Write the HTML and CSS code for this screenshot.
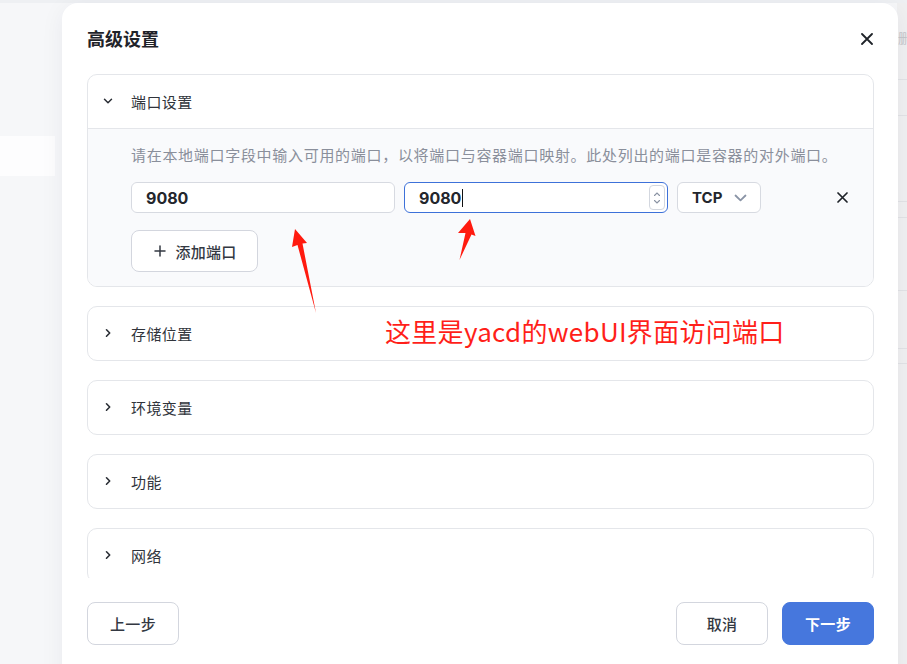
FILE: index.html
```html
<!DOCTYPE html>
<html lang="zh-CN">
<head>
<meta charset="utf-8">
<title>高级设置</title>
<link rel="stylesheet" href="styles.css">
</head>
<body>
<div class="page">
  <div class="page-left">
    <div class="page-row"></div>
  </div>
  <div class="page-right">
    <span class="peek">删</span>
    <div class="rline l1"></div>
    <div class="rline l2"></div>
    <div class="rline l3"></div>
    <div class="rline l4"></div>
    <div class="rline l5"></div>
    <div class="rline l6"></div>
    <div class="rline l7"></div>
  </div>
</div>

<div class="modal">
  <div class="modal-head">
    <h1 class="modal-title">高级设置</h1>
    <button class="icon-btn close-btn" aria-label="关闭">
      <svg width="12" height="12" viewBox="0 0 12 12"><path d="M1 1L11 11M11 1L1 11" stroke="#1f2329" stroke-width="1.8" stroke-linecap="round"/></svg>
    </button>
  </div>

  <div class="modal-body">
    <section class="panel open">
      <div class="panel-head">
        <svg class="chev" width="10" height="10" viewBox="0 0 10 10"><path d="M1.5 3.2L5 6.7L8.5 3.2" fill="none" stroke="#2b2f36" stroke-width="1.5" stroke-linecap="round" stroke-linejoin="round"/></svg>
        <span class="panel-title">端口设置</span>
      </div>
      <div class="panel-content">
        <p class="desc">请在本地端口字段中输入可用的端口，以将端口与容器端口映射。此处列出的端口是容器的对外端口。</p>
        <div class="port-row">
          <div class="field">9080</div>
          <div class="field focused">
            <span>9080</span><span class="caret"></span>
            <span class="spinner">
              <svg width="8" height="6" viewBox="0 0 8 6"><path d="M1.5 4.5L4 2L6.5 4.5" fill="none" stroke="#8a93a3" stroke-width="1.1" stroke-linecap="round"/></svg>
              <svg width="8" height="6" viewBox="0 0 8 6"><path d="M1.5 1.5L4 4L6.5 1.5" fill="none" stroke="#8a93a3" stroke-width="1.1" stroke-linecap="round"/></svg>
            </span>
          </div>
          <div class="select">
            <span>TCP</span>
            <svg width="13" height="8" viewBox="0 0 13 8"><path d="M1.5 1.5L6.5 6.3L11.5 1.5" fill="none" stroke="#8a94a6" stroke-width="1.8" stroke-linecap="round" stroke-linejoin="round"/></svg>
          </div>
          <button class="icon-btn del-btn" aria-label="删除">
            <svg width="11" height="11" viewBox="0 0 11 11"><path d="M1 1L10 10M10 1L1 10" stroke="#1f2329" stroke-width="1.7" stroke-linecap="round"/></svg>
          </button>
        </div>
        <button class="btn add-btn">
          <svg width="12" height="12" viewBox="0 0 12 12"><path d="M6 1V11M1 6H11" stroke="#333842" stroke-width="1.5" stroke-linecap="round"/></svg>
          <span>添加端口</span>
        </button>
      </div>
    </section>

    <section class="panel">
      <div class="panel-head">
        <svg class="chev" width="10" height="10" viewBox="0 0 10 10"><path d="M3.5 1.8L6.7 5L3.5 8.2" fill="none" stroke="#2b2f36" stroke-width="1.6" stroke-linecap="round" stroke-linejoin="round"/></svg>
        <span class="panel-title">存储位置</span>
      </div>
    </section>
    <section class="panel">
      <div class="panel-head">
        <svg class="chev" width="10" height="10" viewBox="0 0 10 10"><path d="M3.5 1.8L6.7 5L3.5 8.2" fill="none" stroke="#2b2f36" stroke-width="1.6" stroke-linecap="round" stroke-linejoin="round"/></svg>
        <span class="panel-title">环境变量</span>
      </div>
    </section>
    <section class="panel">
      <div class="panel-head">
        <svg class="chev" width="10" height="10" viewBox="0 0 10 10"><path d="M3.5 1.8L6.7 5L3.5 8.2" fill="none" stroke="#2b2f36" stroke-width="1.6" stroke-linecap="round" stroke-linejoin="round"/></svg>
        <span class="panel-title">功能</span>
      </div>
    </section>
    <section class="panel">
      <div class="panel-head">
        <svg class="chev" width="10" height="10" viewBox="0 0 10 10"><path d="M3.5 1.8L6.7 5L3.5 8.2" fill="none" stroke="#2b2f36" stroke-width="1.6" stroke-linecap="round" stroke-linejoin="round"/></svg>
        <span class="panel-title">网络</span>
      </div>
    </section>
  </div>

  <div class="modal-foot">
    <button class="btn foot-btn">上一步</button>
    <div class="foot-right">
      <button class="btn foot-btn">取消</button>
      <button class="btn foot-btn primary">下一步</button>
    </div>
  </div>
</div>

<svg class="arrows" width="907" height="664" viewBox="0 0 907 664">
  <path d="M295 229 L307 243 L302.5 243.5 L316 313 L297.5 245 L292 247 Z" fill="#ff1a0f"/>
  <path d="M470 219 L475.5 236 L471.5 234.5 L459.5 260 L465.5 233 L458 233 Z" fill="#ff1a0f"/>
</svg>
<div class="note">这里是yacd的webUI界面访问端口</div>
</body>
</html>
```

FILE: styles.css
```css
* { box-sizing: border-box; }
html, body { margin: 0; padding: 0; }
body {
  width: 907px;
  height: 664px;
  overflow: hidden;
  position: relative;
  background: #f6f7f9;
  font-family: "Noto Sans CJK SC", "Noto Sans", sans-serif;
  color: #2b2f36;
}

.page {
  display: flex;
  justify-content: space-between;
  height: 664px;
  border-top: 3px solid #eef0f3;
}
.page-left {
  width: 62px;
  padding-top: 133px;
}
.page-row {
  width: 55px;
  height: 40px;
  background: #fdfdfe;
}
.page-right {
  width: 10px;
  background: #f0f0f1;
  position: relative;
  overflow: hidden;
}
.peek {
  position: absolute;
  left: 1px;
  top: 27px;
  font-size: 13px;
  line-height: 16px;
  color: #c4c6ca;
}
.rline { position: absolute; left: 0; right: 0; height: 1px; background: #e2e3e6; }
.l1 { top: 76px; } .l2 { top: 112px; } .l3 { top: 198px; } .l4 { top: 214px; }
.l5 { top: 287px; } .l6 { top: 345px; } .l7 { top: 360px; }

.modal {
  position: absolute;
  left: 62px;
  top: 3px;
  width: 836px;
  height: 690px;
  background: #ffffff;
  border-radius: 16px;
  box-shadow: 0 4px 24px rgba(30, 40, 60, 0.06);
  padding: 0 24px 0 25px;
}

.modal-head {
  display: flex;
  justify-content: space-between;
  padding-top: 22px;
  height: 71px;
  align-items: flex-start;
}
.modal-title {
  margin: 0;
  font-size: 18px;
  line-height: 26px;
  font-weight: 700;
  color: #1f2329;
}
.icon-btn {
  border: 0;
  background: transparent;
  padding: 0;
  display: flex;
  align-items: center;
  justify-content: center;
  cursor: pointer;
}
.close-btn {
  width: 24px;
  height: 24px;
  margin-top: 2px;
  margin-right: -5px;
}

.modal-body {
  height: 504px;
  overflow: hidden;
  display: flex;
  flex-direction: column;
  gap: 19px;
}

.panel {
  border: 1px solid #e4e6ea;
  border-radius: 10px;
  flex-shrink: 0;
  overflow: hidden;
  background: #fff;
}
.panel-head {
  height: 53px;
  display: flex;
  align-items: center;
  padding-left: 15px;
  padding-bottom: 1px;
}
.chev { margin-right: 18px; }
.panel-title {
  font-size: 15px;
  letter-spacing: 0.4px;
  color: #30343b;
}

.panel-content {
  border-top: 1px solid #e4e6ea;
  background: #f9fafc;
  padding: 15px 0 14px 43px;
}
.desc {
  margin: 0 0 16px 0;
  font-size: 15px;
  line-height: 22px;
  letter-spacing: 0.7px;
  color: #8a8f9b;
}

.port-row {
  display: flex;
  align-items: center;
  gap: 9px;
}
.field {
  width: 264px;
  height: 31px;
  background: #fff;
  border: 1px solid #d7dae1;
  border-radius: 6px;
  padding-left: 14px;
  display: flex;
  align-items: center;
  font-family: Inter, "Noto Sans", sans-serif;
  font-weight: 700;
  font-size: 16px;
  color: #23262c;
  position: relative;
}
.field.focused {
  border-color: #3d71d9;
}
.caret {
  display: inline-block;
  width: 1px;
  height: 18px;
  background: #111;
  margin-left: 1px;
}
.spinner {
  position: absolute;
  right: 2px;
  top: 2px;
  width: 16px;
  height: 25px;
  border: 1px solid #d3d7df;
  border-radius: 4px;
  display: flex;
  flex-direction: column;
  align-items: center;
  justify-content: center;
  gap: 2px;
}
.select {
  width: 84px;
  height: 31px;
  background: #fff;
  border: 1px solid #d7dae1;
  border-radius: 6px;
  display: flex;
  align-items: center;
  justify-content: space-between;
  padding: 0 13px 0 14px;
  font-family: Inter, "Noto Sans", sans-serif;
  font-weight: 700;
  font-size: 15px;
  color: #23262c;
}
.del-btn {
  width: 20px;
  height: 20px;
  margin-left: 62px;
}

.btn {
  font-family: "Noto Sans CJK SC", "Noto Sans", sans-serif;
  background: #fff;
  border: 1px solid #d3d6de;
  border-radius: 8px;
  cursor: pointer;
  color: #2b2f36;
}
.add-btn {
  margin-top: 17px;
  width: 127px;
  height: 42px;
  display: flex;
  align-items: center;
  justify-content: center;
  gap: 9px;
  font-size: 15px;
  font-weight: 500;
  letter-spacing: 0.3px;
  color: #333842;
  padding: 0 0 0 2px;
}

.modal-foot {
  display: flex;
  justify-content: space-between;
  align-items: center;
  padding-top: 24px;
}
.foot-right { display: flex; gap: 14px; }
.foot-btn {
  width: 92px;
  height: 43px;
  font-size: 15px;
  font-weight: 500;
  letter-spacing: 0.3px;
  color: #333842;
}
.foot-btn.primary {
  background: #4677dd;
  border-color: #4677dd;
  color: #fff;
  font-weight: 700;
}

.arrows {
  position: absolute;
  left: 0;
  top: 0;
  pointer-events: none;
}
.note {
  position: absolute;
  left: 385px;
  top: 313px;
  font-size: 26px;
  line-height: 36px;
  letter-spacing: 0.3px;
  color: #ff1f1a;
  font-family: "Noto Sans CJK SC", sans-serif;
  white-space: nowrap;
}
```
